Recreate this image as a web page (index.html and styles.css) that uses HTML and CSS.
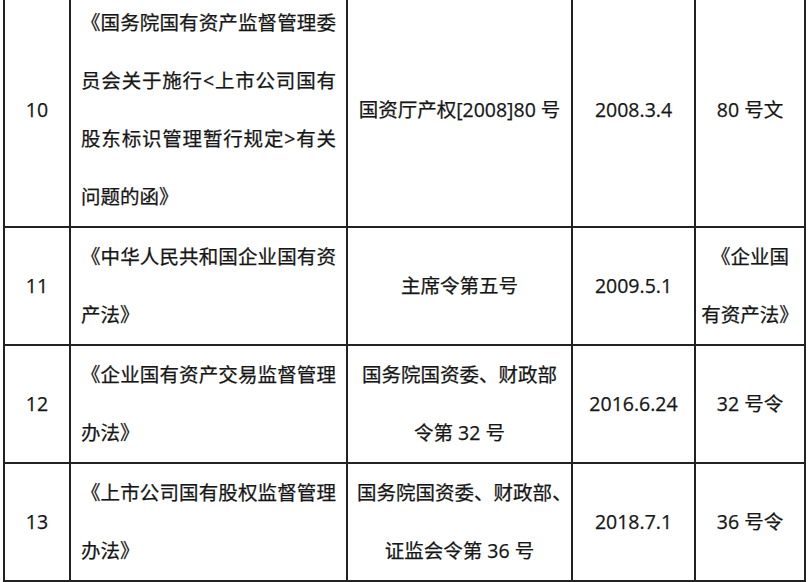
FILE: index.html
```html
<!DOCTYPE html>
<html lang="zh-CN">
<head>
<meta charset="utf-8">
<title>法规列表</title>
<link rel="stylesheet" href="styles.css">
</head>
<body>
<table class="law-table">
  <colgroup>
    <col class="c-no">
    <col class="c-name">
    <col class="c-doc">
    <col class="c-date">
    <col class="c-short">
  </colgroup>
  <tbody>
    <tr class="r4">
      <td class="num">10</td>
      <td class="name">《国务院国有资产监督管理委员会关于施行&lt;上市公司国有股东标识管理暂行规定&gt;有关问题的函》</td>
      <td class="center">国资厅产权[2008]80 号</td>
      <td class="center">2008.3.4</td>
      <td class="center">80 号文</td>
    </tr>
    <tr class="r2">
      <td class="num">11</td>
      <td class="name">《中华人民共和国企业国有资产法》</td>
      <td class="center">主席令第五号</td>
      <td class="center">2009.5.1</td>
      <td class="center">《企业国<br>有资产法》</td>
    </tr>
    <tr class="r2">
      <td class="num">12</td>
      <td class="name">《企业国有资产交易监督管理办法》</td>
      <td class="center">国务院国资委、财政部<br>令第 32 号</td>
      <td class="center">2016.6.24</td>
      <td class="center">32 号令</td>
    </tr>
    <tr class="r2">
      <td class="num">13</td>
      <td class="name">《上市公司国有股权监督管理办法》</td>
      <td class="center">国务院国资委、财政部<span class="trim">、</span><br>证监会令第 36 号</td>
      <td class="center">2018.7.1</td>
      <td class="center">36 号令</td>
    </tr>
  </tbody>
</table>
</body>
</html>
```

FILE: styles.css
```css
html, body {
  margin: 0;
  padding: 0;
  background: #ffffff;
}

body {
  overflow: hidden;
  font-family: "Open Sans", "Noto Sans CJK SC", sans-serif;
  font-size: 19.5px;
  color: #161616;
  -webkit-text-stroke: 0.25px #161616;
}

.law-table {
  border-collapse: collapse;
  table-layout: fixed;
  width: 803px;
  margin: -8px 0 0 3px;
}

.c-no { width: 66px; }
.c-name { width: 277px; }
.c-doc { width: 225px; }
.c-date { width: 123px; }
.c-short { width: 110px; }

.law-table td {
  border: 2px solid #222222;
  padding: 0 10px;
  line-height: 58px;
  vertical-align: middle;
}

.law-table td.num {
  text-align: center;
  padding: 0;
}

.law-table td.name {
  text-align: justify;
}

.law-table td.center {
  text-align: center;
  padding: 0 2px;
  white-space: nowrap;
}

.trim {
  letter-spacing: -0.5em;
}
```
